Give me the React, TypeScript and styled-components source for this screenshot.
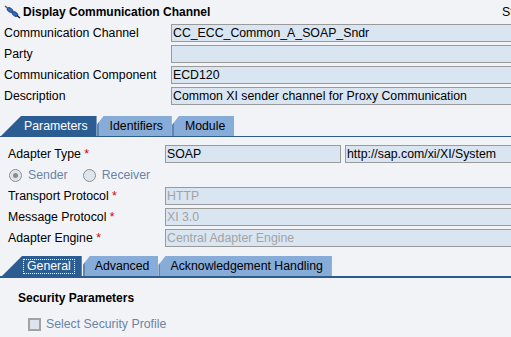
import React from "react";
import styled, { createGlobalStyle, css } from "styled-components";

const Global = createGlobalStyle`
  html, body {
    margin: 0;
    padding: 0;
    background: #f2f3f7;
  }
  body {
    font-family: "Liberation Sans", Arial, sans-serif;
    font-size: 12.3px;
    color: #000;
  }
`;

const Page = styled.div`
  width: 511px;
  height: 337px;
  overflow: hidden;
  background: #f2f3f7;
`;

const TitleBar = styled.div`
  display: grid;
  grid-template-columns: 498px auto;
  align-items: center;
  height: 24px;
  padding-left: 4px;
`;

const TitleGroup = styled.div`
  display: flex;
  align-items: center;
  gap: 2px;
`;

const Title = styled.span`
  font-weight: bold;
  font-size: 12px;
`;

const Status = styled.span`
  white-space: nowrap;
`;

const HeaderForm = styled.div`
  display: grid;
  grid-template-columns: 167px 400px;
  grid-auto-rows: 18px;
  row-gap: 3px;
  padding-left: 4px;
`;

const Label = styled.span`
  display: flex;
  align-items: center;
  white-space: nowrap;
`;

const Field = styled.div<{ $width?: number; $disabled?: boolean }>`
  box-sizing: border-box;
  flex: none;
  height: 18px;
  width: ${(p) => (p.$width ? `${p.$width}px` : "400px")};
  background: #dae5f2;
  border: 1px solid #9a9a9a;
  border-right: none;
  padding-left: 1px;
  display: flex;
  align-items: center;
  white-space: nowrap;
  overflow: hidden;
  color: ${(p) => (p.$disabled ? "#a3a3a3" : "#000")};
  ${(p) =>
    p.$width &&
    css`
      border-right: 1px solid #9a9a9a;
    `}
`;

const TabStrip = styled.div<{ $line: number; $top: number }>`
  display: flex;
  align-items: flex-end;
  height: 20px;
  margin-top: ${(p) => p.$top}px;
  border-bottom: ${(p) => p.$line}px solid #2b5b8f;
  white-space: nowrap;
`;

const Tab = styled.div<{ $active?: boolean; $ml: number; $pl: number; $pr: number }>`
  height: 20px;
  margin-left: ${(p) => p.$ml}px;
  padding-left: ${(p) => p.$pl}px;
  padding-right: ${(p) => p.$pr}px;
  display: flex;
  align-items: center;
  ${(p) =>
    p.$active
      ? css`
          background: #2c5d92;
          color: #fff;
          clip-path: polygon(0 100%, 20px 0, 100% 0, 100% 100%);
        `
      : css`
          background: linear-gradient(to right, #5d86b6 0 2px, #88acd8 2px);
          color: #000;
          clip-path: polygon(0 100%, 0 45%, 7px 0, 100% 0, 100% 100%);
        `}
`;

const Focus = styled.span`
  border: 1px dotted #fff;
  padding: 0 3px;
  line-height: 13px;
`;

const ParamForm = styled.div`
  display: flex;
  flex-direction: column;
  gap: 3px;
  margin-top: 8px;
  padding-left: 8px;
`;

const ParamRow = styled.div`
  display: flex;
  align-items: center;
  height: 18px;
  gap: 4px;
`;

const ParamLabel = styled.span`
  width: 153px;
  flex: none;
  white-space: nowrap;
`;

const Req = styled.span`
  color: #d40000;
`;

const RadioRow = styled.div`
  display: flex;
  align-items: center;
  height: 18px;
  padding-left: 1px;
  color: #6a84a6;
`;

const RadioItem = styled.label<{ $ml?: number }>`
  display: flex;
  align-items: center;
  gap: 6px;
  margin-left: ${(p) => p.$ml ?? 0}px;
`;

const RadioCircle = styled.span<{ $checked?: boolean }>`
  box-sizing: border-box;
  width: 13px;
  height: 13px;
  border-radius: 50%;
  border: 1px solid #8e8e8e;
  background: #dde5ee;
  display: flex;
  align-items: center;
  justify-content: center;
  &::after {
    content: "";
    width: 5px;
    height: 5px;
    border-radius: 50%;
    background: ${(p) => (p.$checked ? "#8a8a8a" : "transparent")};
  }
`;

const Section = styled.div`
  padding-left: 18px;
  margin-top: 12px;
`;

const SectionTitle = styled.div`
  font-weight: bold;
  font-size: 12px;
  height: 16px;
  line-height: 16px;
`;

const CheckRow = styled.div`
  display: flex;
  align-items: center;
  gap: 5px;
  margin-top: 11px;
  padding-left: 10px;
  color: #6a84a6;
`;

const CheckBox = styled.span`
  box-sizing: border-box;
  width: 13px;
  height: 13px;
  border: 2px solid #a2a2a2;
  background: #dde4ee;
`;

const PlugIcon = () => (
  <svg width="17" height="14" viewBox="0 0 17 14">
    <line x1="1" y1="1" x2="4" y2="3.5" stroke="#555" strokeWidth="1.5" />
    <ellipse cx="6" cy="5" rx="3.2" ry="2" transform="rotate(35 6 5)" fill="#2f6cc0" stroke="#1d3f78" strokeWidth="0.8" />
    <ellipse cx="11" cy="9" rx="3.2" ry="2" transform="rotate(35 11 9)" fill="#2f6cc0" stroke="#1d3f78" strokeWidth="0.8" />
    <line x1="13" y1="10.5" x2="16" y2="13" stroke="#222" strokeWidth="1.5" />
  </svg>
);

export default function App() {
  return (
    <>
      <Global />
      <Page>
        <TitleBar>
          <TitleGroup>
            <PlugIcon />
            <Title>Display Communication Channel</Title>
          </TitleGroup>
          <Status>Status</Status>
        </TitleBar>
        <HeaderForm>
          <Label>Communication Channel</Label>
          <Field>CC_ECC_Common_A_SOAP_Sndr</Field>
          <Label>Party</Label>
          <Field />
          <Label>Communication Component</Label>
          <Field>ECD120</Field>
          <Label>Description</Label>
          <Field>Common XI sender channel for Proxy Communication</Field>
        </HeaderForm>

        <TabStrip $line={1} $top={11}>
          <Tab $active $ml={1} $pl={23} $pr={9}>Parameters</Tab>
          <Tab $ml={0} $pl={13} $pr={9}>Identifiers</Tab>
          <Tab $ml={0} $pl={13} $pr={9}>Module</Tab>
        </TabStrip>

        <ParamForm>
          <ParamRow>
            <ParamLabel>
              Adapter Type <Req>*</Req>
            </ParamLabel>
            <Field $width={176}>SOAP</Field>
            <Field $width={200}>http://sap.com/xi/XI/System</Field>
          </ParamRow>
          <RadioRow>
            <RadioItem>
              <RadioCircle $checked />
              Sender
            </RadioItem>
            <RadioItem $ml={15}>
              <RadioCircle />
              Receiver
            </RadioItem>
          </RadioRow>
          <ParamRow>
            <ParamLabel>
              Transport Protocol <Req>*</Req>
            </ParamLabel>
            <Field $disabled>HTTP</Field>
          </ParamRow>
          <ParamRow>
            <ParamLabel>
              Message Protocol <Req>*</Req>
            </ParamLabel>
            <Field $disabled>XI 3.0</Field>
          </ParamRow>
          <ParamRow>
            <ParamLabel>
              Adapter Engine <Req>*</Req>
            </ParamLabel>
            <Field $disabled>Central Adapter Engine</Field>
          </ParamRow>
        </ParamForm>

        <TabStrip $line={2} $top={9}>
          <Tab $active $ml={2} $pl={21} $pr={7}>
            <Focus>General</Focus>
          </Tab>
          <Tab $ml={1} $pl={12} $pr={9}>Advanced</Tab>
          <Tab $ml={0} $pl={12} $pr={9}>Acknowledgement Handling</Tab>
        </TabStrip>

        <Section>
          <SectionTitle>Security Parameters</SectionTitle>
          <CheckRow>
            <CheckBox />
            Select Security Profile
          </CheckRow>
        </Section>
      </Page>
    </>
  );
}
